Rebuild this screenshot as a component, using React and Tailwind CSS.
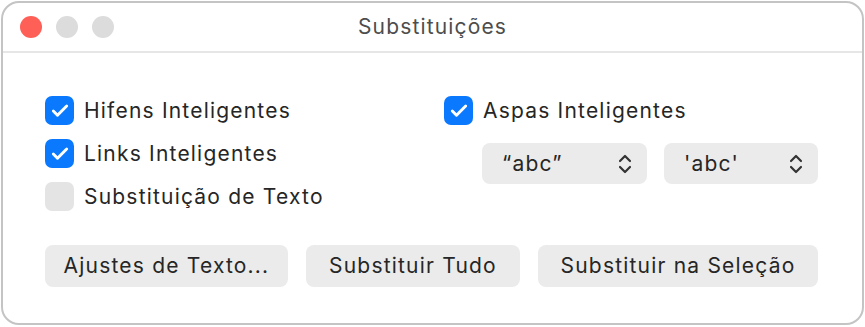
import { Check } from 'lucide-react'

const font = { fontFamily: 'Inter, "Noto Sans", sans-serif' }

const CheckRow = ({ label, checked }) => (
  <div className="flex items-center gap-[10px] h-[43px]">
    {checked ? (
      <div className="w-[29px] h-[29px] rounded-[7px] bg-[#0a79fe] flex items-center justify-center">
        <Check className="w-[20px] h-[20px] text-white" strokeWidth={3.5} />
      </div>
    ) : (
      <div className="w-[29px] h-[29px] rounded-[7px] bg-[#e4e4e4]" />
    )}
    <span className="text-[21px] text-[#262626] tracking-[1.2px]">{label}</span>
  </div>
)

const Popup = ({ value, width }) => (
  <div
    className={`${width} h-[41px] rounded-[8px] bg-[#ebebeb] flex items-center justify-between pl-[20px] pr-[15px]`}>
    <span className="text-[21px] text-[#262626] tracking-[1.2px]">{value}</span>
    <svg width="14" height="22" viewBox="0 0 14 22" fill="none">
      <path d="M2 8 L7 3 L12 8" stroke="#333" strokeWidth="2.2" strokeLinecap="round" strokeLinejoin="round" />
      <path d="M2 14 L7 19 L12 14" stroke="#333" strokeWidth="2.2" strokeLinecap="round" strokeLinejoin="round" />
    </svg>
  </div>
)

const Button = ({ children, width }) => (
  <div
    className={`${width} h-[42px] rounded-[8px] bg-[#ebebeb] flex items-center justify-center text-[21px] tracking-[1.2px] text-[#262626]`}>
    {children}
  </div>
)

export default function App() {
  return (
    <div className="w-[865px] h-[327px] bg-white p-[1px]" style={font}>
      <div className="w-[863px] h-[324px] rounded-[18px] border-2 border-[#c4c4c4] bg-white overflow-hidden flex flex-col">
        <div className="relative h-[50px] border-b-2 border-[#e6e6e6] flex items-center px-[17px] gap-[14px]">
          <div className="w-[22px] h-[22px] rounded-full bg-[#fe5f57]" />
          <div className="w-[22px] h-[22px] rounded-full bg-[#dcdcdc]" />
          <div className="w-[22px] h-[22px] rounded-full bg-[#dcdcdc]" />
          <div className="absolute inset-0 flex items-center justify-center text-[21px] tracking-[1.15px] text-[#4d4d4d]">
            Substituições
          </div>
        </div>
        <div className="flex pl-[42px] pt-[36px]">
          <div className="w-[399px] flex flex-col">
            <CheckRow label="Hifens Inteligentes" checked />
            <CheckRow label="Links Inteligentes" checked />
            <CheckRow label="Substituição de Texto" />
          </div>
          <div className="flex flex-col">
            <CheckRow label="Aspas Inteligentes" checked />
            <div className="flex gap-[17px] pl-[38px] mt-[11px]">
              <Popup value="“abc”" width="w-[165px]" />
              <Popup value="'abc'" width="w-[154px]" />
            </div>
          </div>
        </div>
        <div className="flex gap-[18px] pl-[42px] mt-[27px]">
          <Button width="w-[243px]">Ajustes de Texto...</Button>
          <Button width="w-[214px]">Substituir Tudo</Button>
          <Button width="w-[280px]">Substituir na Seleção</Button>
        </div>
      </div>
    </div>
  )
}
